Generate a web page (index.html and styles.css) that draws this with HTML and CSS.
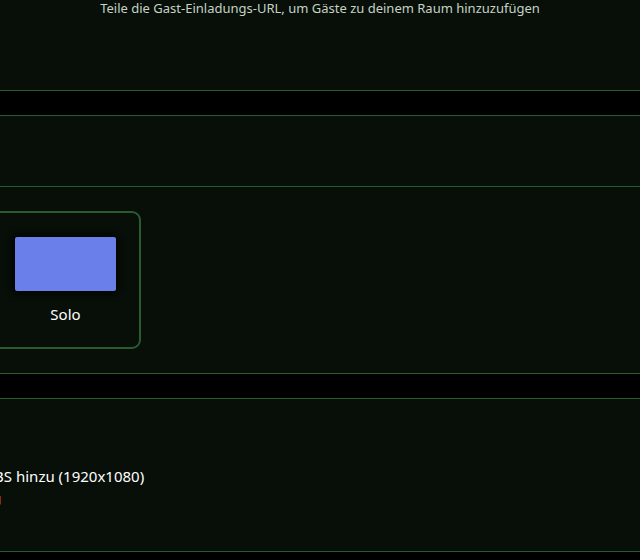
FILE: index.html
```html
<!DOCTYPE html>
<html lang="de">

<head>
    <meta charset="UTF-8">
    <meta name="viewport" content="width=device-width, initial-scale=1.0">
    <title>Raum</title>
    <link rel="stylesheet" href="styles.css">
</head>

<body>
    <!-- Einladung -->
    <section class="panel invite">
        <p class="hint">Teile die Gast-Einladungs-URL, um Gäste zu deinem Raum hinzuzufügen</p>
    </section>

    <div class="spacer"></div>

    <!-- Layout-Auswahl -->
    <section class="panel">
        <div class="block empty"></div>
        <div class="block layouts">
            <div class="layout-card">
                <div class="preview"></div>
                <span class="layout-name">Solo</span>
            </div>
        </div>
    </section>

    <div class="spacer"></div>

    <!-- Quellen -->
    <section class="panel sources">
        <p class="source-line">Füge eine Quelle zu OBS hinzu (1920x1080)</p>
        <p class="warning">Achtung</p>
    </section>
</body>

</html>
```

FILE: styles.css
```css
body {
    margin: 0;
    background-color: #000;
    font-family: "Noto Sans", "Open Sans", sans-serif;
    color: #fff;
    overflow: hidden;
}

.panel {
    background-color: #070f08;
    border-top: 1px solid #2a5a30;
    border-bottom: 1px solid #2a5a30;
}

.invite {
    border-top: none;
    height: 90px;
}

.hint {
    margin: 0;
    text-align: center;
    font-size: 13px;
    line-height: 17px;
    color: #c6d2c6;
}

.spacer {
    height: 24px;
}

.block.empty {
    height: 70px;
    border-bottom: 1px solid #2a5a30;
}

.layouts {
    display: flex;
    height: 186px;
    align-items: center;
}

.layout-card {
    display: flex;
    flex-direction: column;
    align-items: center;
    width: 147px;
    height: 134px;
    margin-left: -10px;
    margin-top: -1px;
    border: 2px solid #2a5a30;
    border-radius: 9px;
}

.preview {
    width: 101px;
    height: 54px;
    margin-top: 24px;
    background-color: #6b7fea;
    border-radius: 2px;
    box-shadow: 0 0 6px 3px #030603;
}

.layout-name {
    margin-top: 13px;
    font-size: 15px;
    line-height: 20px;
}

.sources {
    height: 154px;
    box-sizing: border-box;
    padding-top: 1px;
}

.source-line {
    margin: 66px 0 0 -160px;
    font-size: 15px;
    line-height: 20px;
    white-space: nowrap;
}

.warning {
    margin: 3px 0 0 -50px;
    font-size: 13px;
    line-height: 18px;
    color: #f0a020;
    white-space: nowrap;
}
```
